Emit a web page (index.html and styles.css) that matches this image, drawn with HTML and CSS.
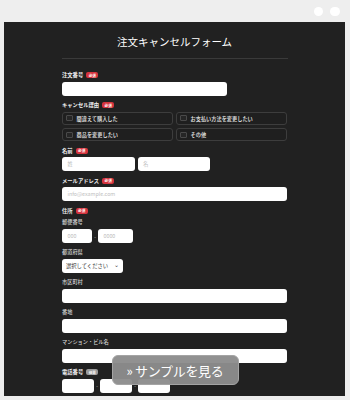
FILE: index.html
```html
<!DOCTYPE html>
<html lang="ja">
<head>
<meta charset="utf-8">
<link rel="stylesheet" href="styles.css">
</head>
<body>
<div class="topbar">
  <span class="dot"></span><span class="dot"></span>
</div>
<div class="panel">
  <h1 class="title">注文キャンセルフォーム</h1>
  <div class="divider"></div>
  <form class="form">
    <div class="field">
      <div class="label">注文番号<span class="badge">必須</span></div>
      <div class="input w-order"></div>
    </div>
    <div class="field">
      <div class="label">キャンセル理由<span class="badge">必須</span></div>
      <div class="checks">
        <div class="check"><span class="box"></span>間違えて購入した</div>
        <div class="check"><span class="box"></span>お支払い方法を変更したい</div>
        <div class="check"><span class="box"></span>商品を変更したい</div>
        <div class="check"><span class="box"></span>その他</div>
      </div>
    </div>
    <div class="field">
      <div class="label">名前<span class="badge">必須</span></div>
      <div class="row">
        <div class="input w-name">姓</div>
        <div class="input w-name">名</div>
      </div>
    </div>
    <div class="field">
      <div class="label">メールアドレス<span class="badge">必須</span></div>
      <div class="input">info@example.com</div>
    </div>
    <div class="field">
      <div class="label">住所<span class="badge">必須</span></div>
      <div class="subs">
        <div class="sub">
          <div class="sublabel">郵便番号</div>
          <div class="row">
            <div class="input w-zip1">000</div>
            <span class="dash">-</span>
            <div class="input w-zip2">0000</div>
          </div>
        </div>
        <div class="sub">
          <div class="sublabel">都道府県</div>
          <div class="select">選択してください<span class="chev">⌄</span></div>
        </div>
        <div class="sub">
          <div class="sublabel">市区町村</div>
          <div class="input"></div>
        </div>
        <div class="sub">
          <div class="sublabel">番地</div>
          <div class="input"></div>
        </div>
        <div class="sub">
          <div class="sublabel">マンション・ビル名</div>
          <div class="input"></div>
        </div>
      </div>
    </div>
    <div class="field">
      <div class="label">電話番号<span class="badge gray">任意</span></div>
      <div class="row">
        <div class="input w-tel"></div>
        <span class="dash">-</span>
        <div class="input w-tel"></div>
        <span class="dash">-</span>
        <div class="input w-tel"></div>
      </div>
    </div>
  </form>
  <div class="sample">» サンプルを見る</div>
</div>
</body>
</html>
```
FILE: styles.css
```css
* { box-sizing: border-box; }
html, body { margin: 0; padding: 0; }
body {
  width: 350px;
  height: 400px;
  background: #eeeeee;
  font-family: "Noto Sans CJK JP", "Noto Sans", sans-serif;
  overflow: hidden;
}
.topbar {
  height: 22px;
  display: flex;
  justify-content: flex-end;
  align-items: flex-start;
  gap: 7px;
  padding: 6.5px 10.5px 0 0;
}
.dot {
  width: 9.5px;
  height: 9.5px;
  border-radius: 50%;
  background: #ffffff;
}
.panel {
  position: relative;
  margin: 0 5px 0 4px;
  height: 374px;
  background: #212121;
  overflow: hidden;
}
.title {
  margin: 0;
  padding-top: 12.5px;
  height: 27px;
  line-height: 14px;
  font-size: 10.5px;
  font-weight: 400;
  color: #ffffff;
  text-align: center;
}
.divider {
  width: 226px;
  height: 1px;
  margin: 9px auto 0;
  background: #3a3a3a;
}
.form {
  width: 225px;
  margin: 12px auto 0;
  display: flex;
  flex-direction: column;
  gap: 5.5px;
}
.label {
  height: 8px;
  display: flex;
  align-items: center;
  gap: 3px;
  margin-bottom: 2.5px;
  font-size: 5.3px;
  font-weight: 700;
  color: #f0f0f0;
}
.badge {
  display: inline-flex;
  align-items: center;
  justify-content: center;
  height: 6px;
  padding: 0 2.5px;
  border-radius: 2px;
  background: #d5333d;
  color: #ffffff;
  font-size: 3.6px;
  font-weight: 700;
}
.badge.gray { background: #9a9a9a; }
.input {
  height: 14px;
  width: 100%;
  background: #ffffff;
  border-radius: 3px;
  padding-left: 5.5px;
  display: flex;
  align-items: center;
  font-size: 5.3px;
  color: #bdbdbd;
}
.w-order { width: 165px; }
.w-name { width: 72.5px; }
.w-zip1 { width: 30px; }
.w-zip2 { width: 35px; }
.w-tel { width: 32px; }
.row {
  display: flex;
  align-items: center;
  gap: 3px;
}
.dash {
  color: #cccccc;
  font-size: 5px;
  width: 0;
  display: flex;
  justify-content: center;
}
.checks {
  display: grid;
  grid-template-columns: 1fr 1fr;
  column-gap: 3px;
  row-gap: 3.4px;
}
.check {
  height: 13.3px;
  border: 1px solid #3d3d3d;
  border-radius: 3px;
  background: #1f1f1f;
  display: flex;
  align-items: center;
  gap: 4px;
  padding-left: 3px;
  font-size: 5.2px;
  font-weight: 700;
  color: #d6d6d6;
}
.box {
  width: 6.5px;
  height: 6.5px;
  border: 1px solid #4a4a4a;
  border-radius: 1px;
  background: #262626;
}
.subs {
  display: flex;
  flex-direction: column;
  gap: 4.7px;
  margin-top: 3.5px;
}
.sublabel {
  height: 8px;
  line-height: 8px;
  margin-bottom: 3px;
  font-size: 5.2px;
  font-weight: 500;
  color: #d4d4d4;
}
.select {
  width: 60.5px;
  height: 14.3px;
  background: #ffffff;
  border-radius: 3px;
  padding: 0 4px 0 4px;
  display: flex;
  align-items: center;
  justify-content: space-between;
  font-size: 5.3px;
  color: #333333;
}
.chev {
  font-size: 6px;
  line-height: 6px;
  margin-top: -2px;
  color: #444444;
}
.sample {
  position: absolute;
  left: 107.5px;
  top: 333px;
  width: 127px;
  height: 30px;
  border-radius: 6px;
  background: rgba(140, 140, 140, 0.96);
  border: 1px solid #a4a4a4;
  color: #ffffff;
  font-size: 13px;
  display: flex;
  align-items: center;
  justify-content: center;
  letter-spacing: -0.3px;
}
```
